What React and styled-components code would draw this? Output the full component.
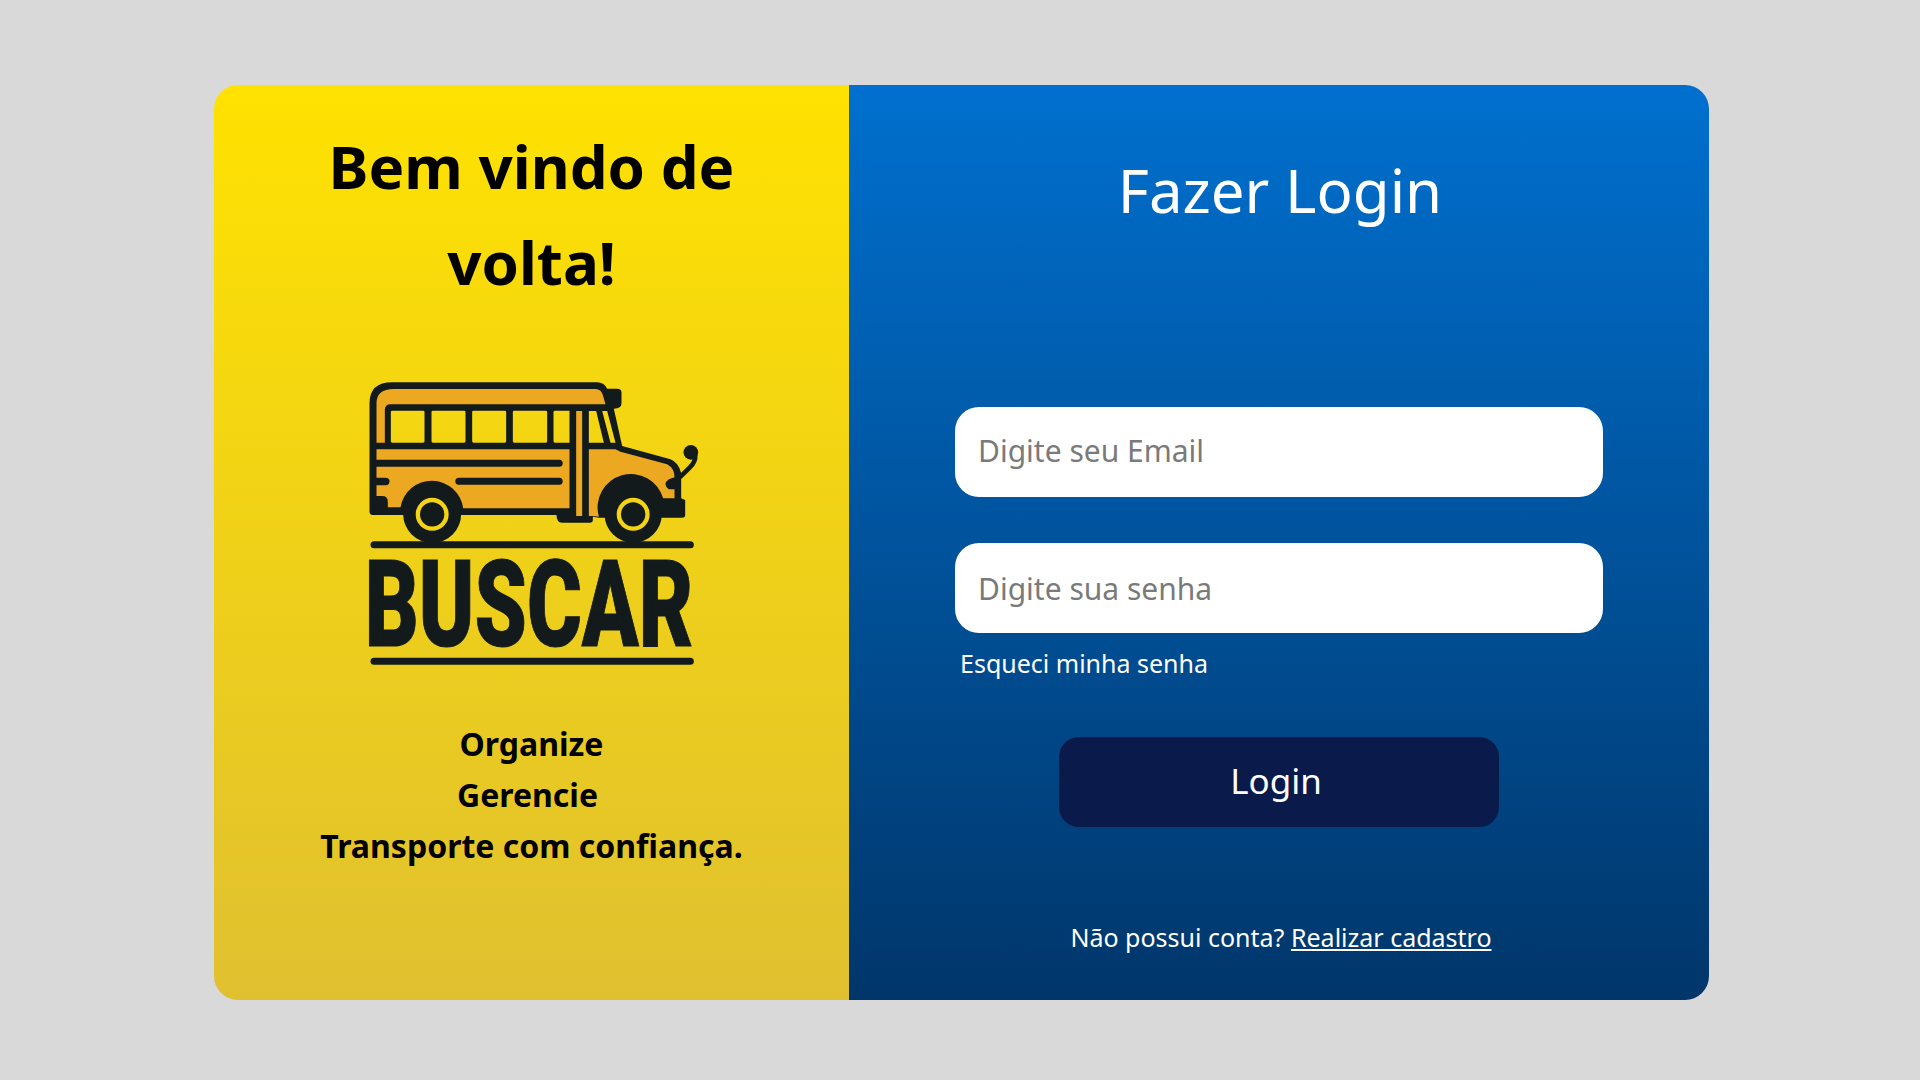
import React from "react";
import styled, { createGlobalStyle } from "styled-components";

const GlobalStyle = createGlobalStyle`
  html, body {
    margin: 0;
    padding: 0;
    background: #d9d9d9;
    font-family: "Noto Sans", sans-serif;
  }
  * {
    box-sizing: border-box;
  }
`;

const Page = styled.div`
  width: 1920px;
  height: 1080px;
  padding: 85px 211px 80px 214px;
  background: #d9d9d9;
`;

const Card = styled.main`
  display: grid;
  grid-template-columns: 635px 860px;
  height: 915px;
  border-radius: 24px;
  overflow: hidden;
`;

const WelcomePanel = styled.section`
  display: flex;
  flex-direction: column;
  align-items: center;
  padding-top: 33px;
  background: linear-gradient(180deg, #ffe200 0%, #e0c030 100%);
  color: #000;
  text-align: center;
`;

const WelcomeTitle = styled.h1`
  width: 480px;
  margin: 0;
  font-size: 60px;
  line-height: 96px;
  font-weight: 700;
`;

const Logo = styled.svg`
  display: block;
  width: 340px;
  height: 310px;
  margin-top: 65px;
`;

const Slogan = styled.p`
  margin: 33px 0 0;
  font-size: 32px;
  line-height: 51px;
  font-weight: 700;
`;

const SloganLine = styled.span`
  display: block;
  padding-right: ${(p) => p.$shift || 0}px;
`;

const LoginPanel = styled.section`
  display: flex;
  flex-direction: column;
  align-items: center;
  padding-top: 39px;
  background: linear-gradient(180deg, #0070cf 0%, #00366a 100%);
  color: #fff;
`;

const LoginTitle = styled.h2`
  margin: 0;
  padding-left: 2px;
  font-size: 60px;
  line-height: 132px;
  font-weight: 400;
`;

const Form = styled.form`
  display: flex;
  flex-direction: column;
  width: 648px;
  margin-top: 151px;
`;

const Field = styled.input`
  width: 100%;
  height: 90px;
  padding: 0 23px ${(p) => p.$lift || 0}px;
  border: none;
  border-radius: 24px;
  background: #fff;
  font-family: inherit;
  font-size: 30px;
  outline: none;

  &::placeholder {
    color: #7a7a7a;
    opacity: 1;
  }

  & + & {
    margin-top: 46px;
  }
`;

const Forgot = styled.a`
  margin: 12px 0 0 5px;
  color: #fff;
  font-size: 25px;
  line-height: 36px;
`;

const LoginButton = styled.button`
  align-self: center;
  width: 440px;
  height: 90px;
  margin-top: 56px;
  padding: 0 6px 3px 0;
  border: none;
  border-radius: 20px;
  background: #0a1a4a;
  color: #fff;
  font-family: inherit;
  font-size: 35px;
`;

const SignUp = styled.p`
  margin: 92px 0 0;
  padding-left: 4px;
  font-size: 25px;
  line-height: 36px;
`;

const SignUpLink = styled.a`
  color: #fff;
  text-decoration: underline;
`;

const BusLogo = () => (
  <Logo viewBox="34.5 45 1020 930" aria-label="Buscar">
    {/* silhouette with the windows cut out */}
    <path
      fill="#121a1b"
      fillRule="evenodd"
      d="M57 455 L57 130 Q57 67 125 67 L740 67 Q760 67 770 86 L800 86 Q813 86 813 98 L813 130 Q813 146 790 146 L815 258 L960 298 Q985 308 992 340 L992 415 L1004 420 L1004 465 Q1004 473 995 473 L745 473 L727 470 L727 480 Q727 488 718 488 L635 488 Q618 488 618 465 L70 465 Q57 465 57 455 Z
      M125 152 H218 Q222 152 222 156 V244 Q222 248 218 248 H125 Q121 248 121 244 V156 Q121 152 125 152 Z
      M247 152 H341 Q345 152 345 156 V244 Q345 248 341 248 H247 Q243 248 243 244 V156 Q243 152 247 152 Z
      M369 152 H463 Q467 152 467 156 V244 Q467 248 463 248 H369 Q365 248 365 244 V156 Q365 152 369 152 Z
      M491 152 H586 Q590 152 590 156 V244 Q590 248 586 248 H491 Q487 248 487 244 V156 Q487 152 491 152 Z
      M613 152 H657 V248 H613 Q609 248 609 244 V156 Q609 152 613 152 Z
      M715 153 H737 L760 248 H715 Z
      M755 153 H770 L795 248 H780 Z"
    />
    <g fill="#eba820">
      <path d="M78 248 L78 130 Q78 87 130 87 L735 87 Q752 87 757 105 L765 133 L120 133 Q103 133 103 150 L103 248 Z" />
      <path d="M78 268 H657 V445 H338 A95 95 0 0 0 150 442 H112 V425 Q112 408 95 408 H78 V376 H105 Q117 376 117 364 Q117 353 105 353 H78 Z" />
      <path d="M715 268 H795 L810 275 L950 313 Q972 325 972 352 L955 358 Q935 372 955 388 H972 V415 H938 A98 98 0 0 0 745 470 L727 468 H715 Z" />
      <rect x="677" y="153" width="18" height="315" />
    </g>
    <g fill="none" stroke="#121a1b" strokeLinecap="round">
      <path d="M78 310 H626" strokeWidth="21" />
      <path d="M325 364 H626" strokeWidth="21" />
      <path d="M1034 285 Q1036 305 1018 322 L990 350" strokeWidth="14" />
    </g>
    <circle cx="1021" cy="277" r="22" fill="#121a1b" />
    <g fill="#121a1b">
      <circle cx="245" cy="462" r="87" />
      <circle cx="848" cy="462" r="86" />
    </g>
    <g fill="#121a1b" stroke="#f3d312" strokeWidth="13">
      <circle cx="245" cy="463" r="43" />
      <circle cx="848" cy="463" r="43" />
    </g>
    <rect x="60" y="544" width="970" height="21" rx="10.5" fill="#121a1b" />
    <text
      transform="translate(43 858) scale(0.69 1)"
      fontFamily="Roboto, 'Liberation Sans', sans-serif"
      fontWeight="900"
      fontSize="364"
      fill="#121a1b"
      stroke="#121a1b"
      strokeWidth="3"
    >
      BUSCAR
    </text>
    <rect x="60" y="893" width="970" height="21" rx="10.5" fill="#121a1b" />
  </Logo>
);

export default function App() {
  return (
    <Page>
      <GlobalStyle />
      <Card>
        <WelcomePanel>
          <WelcomeTitle>Bem vindo de volta!</WelcomeTitle>
          <BusLogo />
          <Slogan>
            <SloganLine>Organize</SloganLine>
            <SloganLine $shift={8}>Gerencie</SloganLine>
            <SloganLine>Transporte com confiança.</SloganLine>
          </Slogan>
        </WelcomePanel>
        <LoginPanel>
          <LoginTitle>Fazer Login</LoginTitle>
          <Form onSubmit={(e) => e.preventDefault()}>
            <Field type="email" placeholder="Digite seu Email" $lift={3} />
            <Field type="password" placeholder="Digite sua senha" />
            <Forgot>Esqueci minha senha</Forgot>
            <LoginButton type="submit">Login</LoginButton>
          </Form>
          <SignUp>
            Não possui conta? <SignUpLink href="#">Realizar cadastro</SignUpLink>
          </SignUp>
        </LoginPanel>
      </Card>
    </Page>
  );
}
